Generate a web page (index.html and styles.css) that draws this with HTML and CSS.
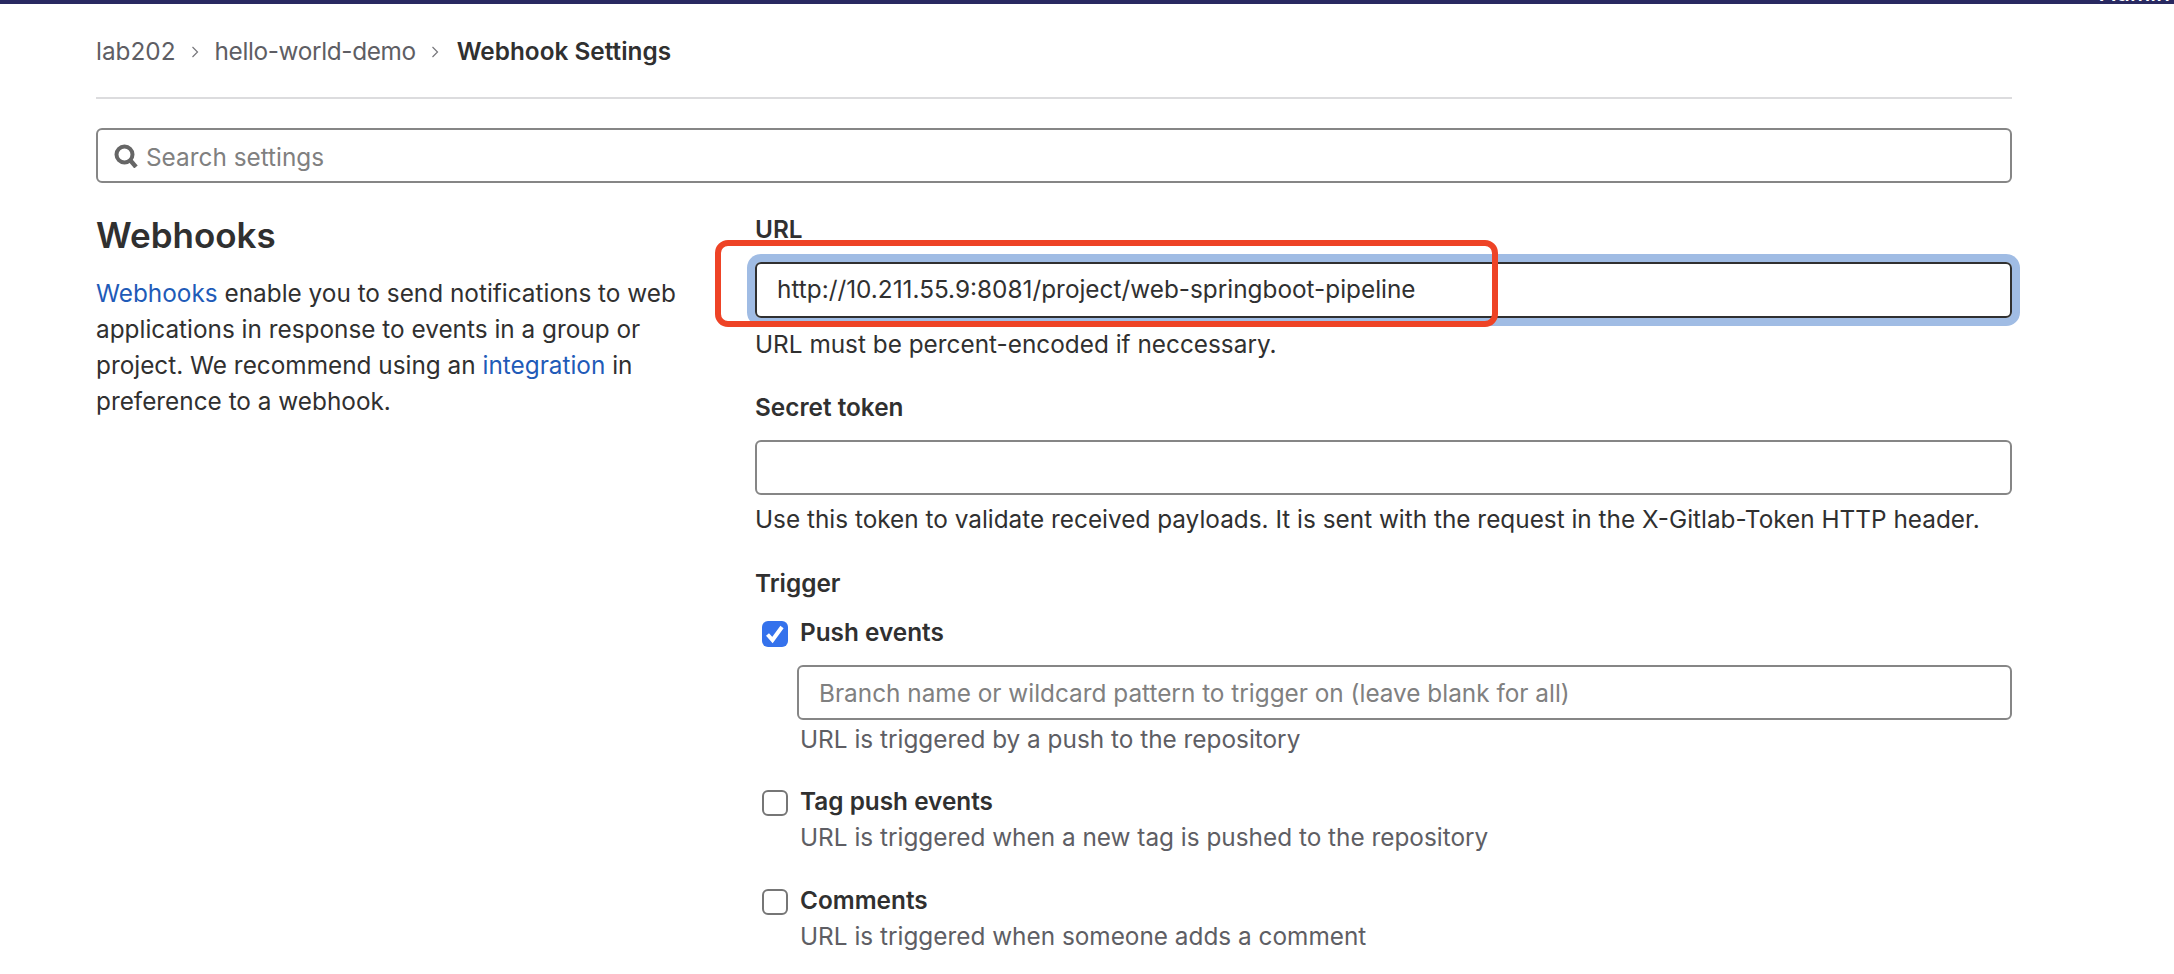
FILE: index.html
```html
<!DOCTYPE html>
<html lang="en">
<head>
<meta charset="utf-8">
<title>Webhook Settings</title>
<link rel="stylesheet" href="styles.css">
</head>
<body>
<header class="topbar"><span class="topbar-text">Admin</span></header>
<main class="page">
  <nav class="breadcrumb">
    <a class="crumb">lab202</a>
    <svg class="chev" viewBox="0 0 8 12"><path d="M1.5 1l5 5-5 5" fill="none" stroke="#77777b" stroke-width="1.2"/></svg>
    <a class="crumb crumb-project">hello-world-demo</a>
    <svg class="chev chev-last" viewBox="0 0 8 12"><path d="M1.5 1l5 5-5 5" fill="none" stroke="#77777b" stroke-width="1.2"/></svg>
    <strong class="crumb-current">Webhook Settings</strong>
  </nav>
  <div class="search">
    <svg class="search-icon" viewBox="0 0 24 24"><circle cx="10.5" cy="10.5" r="8" fill="none" stroke="#666" stroke-width="4"/><path d="M16 16l6 7" stroke="#666" stroke-width="4.4" fill="none"/></svg>
    <span class="placeholder">Search settings</span>
  </div>
  <div class="layout">
    <section class="intro">
      <h1>Webhooks</h1>
      <p><a class="link">Webhooks</a> enable you to send notifications to web applications in response to events in a group or project. We recommend using an <a class="link">integration</a> in preference to a webhook.</p>
    </section>
    <form class="form">
      <div class="field field-url">
        <label class="label">URL</label>
        <div class="input input-focus">http://10.211.55.9:8081/project/web-springboot-pipeline</div>
        <div class="annotation"></div>
        <p class="help help-url">URL must be percent-encoded if neccessary.</p>
      </div>
      <div class="field field-token">
        <label class="label">Secret token</label>
        <div class="input"></div>
        <p class="help">Use this token to validate received payloads. It is sent with the request in the X-Gitlab-Token HTTP header.</p>
      </div>
      <div class="field-trigger">
        <label class="label">Trigger</label>
        <div class="check check-push">
          <span class="box box-on"><svg viewBox="0 0 26 26"><path d="M5.5 13.5l5 5.5L20 6" fill="none" stroke="#fff" stroke-width="4"/></svg></span>
          <div class="check-body">
            <div class="check-title">Push events</div>
            <div class="input input-branch"><span class="placeholder">Branch name or wildcard pattern to trigger on (leave blank for all)</span></div>
            <p class="check-help check-help-push">URL is triggered by a push to the repository</p>
          </div>
        </div>
        <div class="check check-tag">
          <span class="box"></span>
          <div class="check-body">
            <div class="check-title">Tag push events</div>
            <p class="check-help">URL is triggered when a new tag is pushed to the repository</p>
          </div>
        </div>
        <div class="check check-comments">
          <span class="box"></span>
          <div class="check-body">
            <div class="check-title">Comments</div>
            <p class="check-help">URL is triggered when someone adds a comment</p>
          </div>
        </div>
      </div>
    </form>
  </div>
</main>
</body>
</html>
```
FILE: styles.css
```css
* { box-sizing: border-box; }
html, body { margin: 0; padding: 0; height: 100%; overflow: hidden; background: #fff; }
body { font-family: Inter, "Liberation Sans", sans-serif; font-size: 24.35px; line-height: 36px; color: #303030; }
p, h1 { margin: 0; }
.topbar { height: 4px; background: #292961; overflow: hidden; display: flex; justify-content: flex-end; align-items: flex-end; padding-right: 4px; }
.topbar-text { flex: none; color: #fff; font-size: 23px; line-height: 23px; font-weight: 500; margin-bottom: -1px; }
.page { width: 2012px; padding-left: 96px; }
.breadcrumb { height: 95px; padding-top: 30px; border-bottom: 2px solid #dcdcde; display: flex; align-items: flex-start; color: #5e5e64; line-height: 34px; }
.crumb { display: block; }
.crumb-project { letter-spacing: -0.35px; }
.chev { width: 8px; height: 12px; margin: 12px 16px 0 15px; flex: none; }
.chev-last { margin-right: 18px; }
.crumb-current { font-weight: 600; color: #303030; }
.search { margin-top: 29px; height: 55px; border: 2px solid #868686; border-radius: 6px; display: flex; align-items: center; padding: 3px 0 0 16px; }
.search-icon { width: 24px; height: 24px; flex: none; margin: -2px 8px 0 0; }
.placeholder { color: #808080; }
.layout { display: grid; grid-template-columns: 659px 1257px; margin-top: 29px; }
h1 { font-size: 35px; line-height: 48px; font-weight: 600; margin: -1px 0 16px; }
.link { color: #1f5bb8; }
.intro p { width: 590px; }
.form { display: block; }
.label { display: block; font-weight: 600; line-height: 34px; }
.input { height: 55px; border: 2px solid #868686; border-radius: 6px; padding-left: 20px; display: flex; align-items: center; }
.field-url { position: relative; }
.field-url .input { margin-top: 16px; padding-bottom: 2px; height: 56px; }
.input-focus { border-color: #303030; box-shadow: 0 0 0 8px #a0bce4; }
.annotation { position: absolute; left: -40px; top: 28px; width: 783px; height: 87px; border: 6px solid #ee4326; border-radius: 13px; }
.help-url { margin-top: 8px; }
.field-token { margin-top: 28px; }
.field-token .input { margin-top: 16px; }
.field-token .help { margin-top: 6px; }
.field-trigger { margin-top: 29px; }
.check { display: flex; }
.check-push { margin-top: 16px; }
.box { flex: none; width: 26px; height: 26px; margin: 5px 12px 0 7px; border: 2px solid #767676; border-radius: 6px; background: #fff; display: block; }
.box svg { display: block; width: 26px; height: 26px; }
.box-on { background: #3572ec; border: 0; margin-top: 5px; }
.check-body { flex: 1; min-width: 0; }
.check-title { font-weight: 600; line-height: 33px; }
.check-help { color: #5e5e64; line-height: 36px; }
.input-branch { margin: 16px 0 0 -3px; }
.check-help-push { margin-top: 1px; }
.check-tag { margin-top: 28px; }
.check-tag .check-title, .check-comments .check-title { margin-bottom: 1px; }
.check-comments { margin-top: 29px; }
```
